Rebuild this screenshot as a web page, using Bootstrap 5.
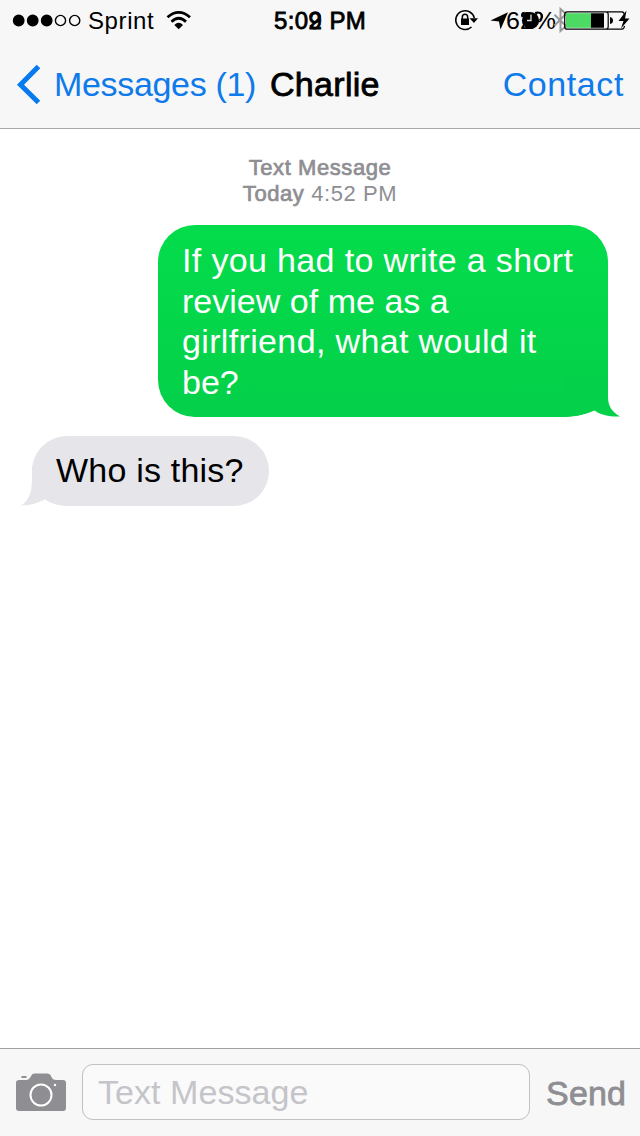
<!DOCTYPE html>
<html lang="en">
<head>
<meta charset="utf-8">
<meta name="viewport" content="width=device-width, initial-scale=1">
<title>Messages</title>
<link href="https://cdn.jsdelivr.net/npm/bootstrap@5.3.0/dist/css/bootstrap.min.css" rel="stylesheet">
<style>
body{font-family:"Liberation Sans",Arial,sans-serif;font-size:34px;line-height:40.6px;color:#000;background:#fff}
.phone{width:640px;height:1136px;overflow:hidden}
.top-bars{background:#f7f7f7;height:129px;border-bottom:1px solid #a9a9ab}
.status{height:40px;font-size:24px;line-height:41px}
.carrier{width:75px;padding-left:4px;letter-spacing:.6px}
.clock-text{letter-spacing:.4px}
.medium{-webkit-text-stroke:.8px currentColor}
.ios-blue{color:#0f7aea}
.title-row{height:88px;line-height:88px;white-space:nowrap}
.back-link{width:216px;letter-spacing:-.33px}
.contact-link{padding-right:16px;letter-spacing:.6px}
.stamp{font-size:22px;line-height:26px;color:#8e8e93;letter-spacing:.58px;padding-top:26px}
.stamp .medium{-webkit-text-stroke-width:.7px}
.bubble{position:relative;white-space:nowrap;z-index:0}
.bubble svg{position:absolute;bottom:0;z-index:-1}
.sent{width:450px;height:192px;margin:18px 32px 0 auto;padding:15px 24px;border-radius:37px;background:linear-gradient(#04dc4b,#04d049);color:#fff;letter-spacing:.35px}
.tight{letter-spacing:.02px}
.sent svg{right:-12px}
.got{width:237px;height:70px;margin:19px 0 0 32px;padding:14px 24px;border-radius:35px;background:#e5e5ea;letter-spacing:.2px}
.got svg{left:-11px}
.composer{height:88px;background:#f7f7f7;border-top:1px solid #a2a2a5;padding:0 13px 0 16px}
.entry,.entry:focus{width:448px;height:56px;margin:-2px 0 0 16px;padding:2px 15px 0;border:1px solid #c0c0c5;border-radius:11px;background:#fafafb;font-size:34px;letter-spacing:.05px}
.entry::placeholder{color:#c4c4c9;opacity:1}
.send-btn{color:#8e8e93;margin:1px 0 0 16px;letter-spacing:.2px}
</style>
<script src="https://cdn.jsdelivr.net/npm/bootstrap@5.3.0/dist/js/bootstrap.bundle.min.js"></script>
</head>
<body>
<div class="phone d-flex flex-column">
  <header class="top-bars flex-shrink-0">
    <div class="status d-flex">
      <svg width="84" height="40"><g stroke="#000" stroke-width="1.4"><circle cx="18.7" cy="20.5" r="5.2"/><circle cx="32.7" cy="20.5" r="5.2"/><circle cx="46.7" cy="20.5" r="5.2"/><g fill="none"><circle cx="60.5" cy="20.5" r="5.1"/><circle cx="74.7" cy="20.5" r="5.1"/></g></g></svg>
      <span class="carrier">Sprint</span>
      <svg width="115" height="40"><g transform="translate(-159 0)"><g fill="none" stroke="#000" stroke-width="2.8"><path d="M167.500 17.200Q178.700 7.600 190 17.200"/><path d="M171.500 21.700Q178.700 14.900 186 21.700"/></g><path d="M174.300 25Q178.700 20.700 183 25L178.700 29.300Z"/></g></svg>
      <span class="medium clock-text">5:0<span class="position-relative">9<span class="position-absolute start-0 top-0" style="line-height:28px">2</span></span> PM</span>
      <svg class="ms-auto" width="190" height="40" viewBox="450 0 190 40">
        <g fill="none" stroke="#000" stroke-width="1.5"><path d="M474.300 18A9.400 9.400 0 1 0 471.500 27"/><path d="M462.300 19V17.300Q462.300 14.300 465 14.300T467.700 17.300V19"/></g>
        <path d="M461 18.500H469V25H461ZM469.500 18.300H478L474 23Z"/>
        <path d="M490.500 20.500L508 12.300L500.500 29.500L499 21.500Z"/>
        <text x="506" y="28.800" font-size="24" textLength="50" lengthAdjust="spacingAndGlyphs">62%</text>
        <circle cx="530.500" cy="20.500" r="8.600"/>
        <path d="M522.500 17Q520.500 13.200 524.500 12.700M535 12.800Q540 11.500 542 15Q543 18 539.500 20" fill="none" stroke="#000" stroke-width="1.800"/>
        <path d="M531 14.500V20.500H527" fill="none" stroke="#ddd" stroke-width="1.300"/>
        <path d="M554.500 14.800L566 26L560.500 31V9L566 14L554.500 25.500" fill="none" stroke="#999" stroke-width="2"/>
        <rect x="564.700" y="11.800" width="43.500" height="17.400" rx="2.500" fill="none" stroke="#000" stroke-width="1.200"/>
        <path d="M607 11.800H622Q624 12 624.500 15M607 29.200H622Q624 29 624.500 26" fill="none" stroke="#000" stroke-width="1.200"/>
        <path d="M566 13.200H591V27.800H566Z" fill="#4cd964"/><path d="M591 13.200H604V27.800H591ZM610 17Q613 17.500 613 20.500T610 24Z"/>
        <path d="M626.500 10.500L618.500 21H623.500L621 28.500L629.500 18.500H625Z"/>
      </svg>
    </div>
    <nav class="title-row d-flex">
      <svg class="flex-shrink-0" width="54" height="88"><path d="M38.500 26.500L20.500 44.800L38.500 62.500" fill="none" stroke="#087aef" stroke-width="5"/></svg>
      <a class="ios-blue back-link text-decoration-none" href="#">Messages (1)</a>
      <span class="medium" style="letter-spacing:.3px">Charlie</span>
      <a class="ios-blue contact-link text-decoration-none ms-auto" href="#">Contact</a>
    </nav>
  </header>
  <main class="flex-grow-1">
    <div class="stamp text-center"><div class="medium">Text Message</div><div><span class="medium">Today</span> 4:52 PM</div></div>
    <div class="bubble sent">If you had to write a short<br><span class="tight">review of me as a</span><br>girlfriend, what would it<br><span class="tight">be?</span>
      <svg width="56" height="40"><path d="M0 40C17 39 24 36 30.500 33.500C37 38 46 40 56 39.500C48 35 44 29 44 20L56 0V40Z" fill="#fff"/><path d="M0 40C17 39 24 36 30.500 33.500C37 38 46 40 56 39.500C48 35 44 29 44 20V0H0Z" fill="#04d049"/></svg>
    </div>
    <div class="bubble got">Who is this?
      <svg width="45" height="40"><path d="M11 0V12C11 25 9 34 0 39.500C9 40 17 37 24 33.500C29 37 36 40 45 40V0Z" fill="#e5e5ea"/><path d="M0 40V39.500C9 40 17 37 24 33.500C29 37 36 40 45 40Z" fill="#fff"/></svg>
    </div>
  </main>
  <footer class="composer d-flex align-items-center flex-shrink-0">
    <svg class="flex-shrink-0" width="50" height="40" viewBox="16 1073 50 40"><path d="M19 1080H26Q29 1080 30.500 1077L32 1074.500Q33 1073.500 35 1073.500H47Q49.500 1073.500 50.500 1075L52 1078Q53 1080 56 1080H63Q66 1080 66 1083V1108Q66 1111 63 1111H19Q16 1111 16 1108V1083Q16 1080 19 1080ZM21.500 1076H26.500V1078H21.500Z" fill="#8e8e93"/><circle cx="41" cy="1095" r="10.500" fill="none" stroke="#fff" stroke-width="2"/><circle cx="55" cy="1085" r="1.200" fill="#fff"/></svg>
    <input class="entry form-control flex-shrink-0" type="text" placeholder="Text Message" aria-label="Text Message">
    <span class="send-btn medium">Send</span>
  </footer>
</div>
</body>
</html>
